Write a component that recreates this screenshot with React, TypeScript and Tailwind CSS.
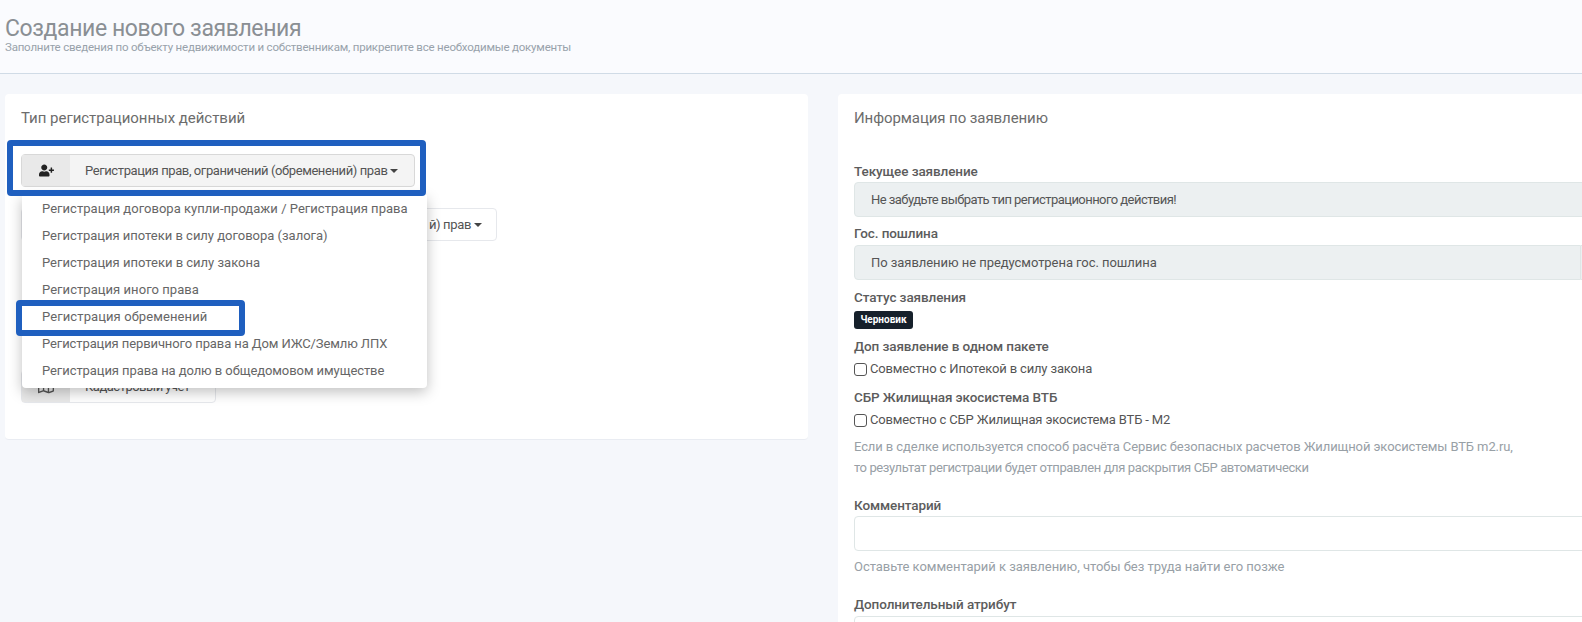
import { FaUserPlus, FaRegMap } from 'react-icons/fa';

const menuItems = [
  { text: 'Регистрация договора купли-продажи / Регистрация права', cls: 'tracking-[0.03px]' },
  { text: 'Регистрация ипотеки в силу договора (залога)', cls: 'tracking-[-0.01px]' },
  { text: 'Регистрация ипотеки в силу закона', cls: 'tracking-[0px]' },
  { text: 'Регистрация иного права', cls: 'tracking-[0.05px]' },
  { text: 'Регистрация обременений', cls: 'tracking-[0.1px]' },
  { text: 'Регистрация первичного права на Дом ИЖС/Землю ЛПХ', cls: 'tracking-[-0.1px]' },
  { text: 'Регистрация права на долю в общедомовом имуществе', cls: 'tracking-[-0.08px]' },
];

function Caret() {
  return <span className="ml-[3px] inline-block align-middle border-x-[4px] border-t-[4px] border-x-transparent border-t-[#444]" />;
}

function ActionButton({ width, active, icon, children }: { width: string; active?: boolean; icon?: React.ReactNode; children?: React.ReactNode }) {
  return (
    <div className={`flex h-[33px] ${width} items-stretch rounded border text-[13px] text-[#555] ${active ? 'border-[#d8d8d8] bg-[#f4f4f4]' : 'border-[#e6e8ec] bg-white'}`}>
      <div className="flex w-[48px] shrink-0 items-center justify-center bg-[#e9e9e9] text-[#222]">{icon}</div>
      <div className="flex flex-1 items-center whitespace-nowrap pl-[15px]">{children}</div>
    </div>
  );
}

function Label({ children }: { children: React.ReactNode }) {
  return <div className="h-[20px] text-[13.5px] font-medium leading-[18px] tracking-[-0.1px] text-[#5c5c5c]">{children}</div>;
}

function ReadOnly({ className, children }: { className?: string; children?: React.ReactNode }) {
  return (
    <div className={`flex h-[35px] items-center rounded-l border border-[#dfe6e6] bg-[#ecf0f1] px-4 text-[13px] text-[#555] ${className ?? ''}`}>
      {children}
    </div>
  );
}

function Check({ label }: { label: string }) {
  return (
    <div className="flex items-center gap-[3px] text-[13px] leading-[20px] tracking-[-0.15px] text-[#555]">
      <span className="h-[13px] w-[13px] rounded-[3px] border border-[#555] bg-white" />
      {label}
    </div>
  );
}

export default function App() {
  return (
    <div className="relative h-[622px] w-[1582px] overflow-hidden bg-[#f5f7fb] font-['Roboto',sans-serif] tracking-[-0.35px]">
      <header className="h-[74px] border-b border-[#d0dbe6] bg-[#fafbfe] px-[5px] pt-[15px]">
        <h1 className="text-[23px] leading-[27px] tracking-[-0.4px] text-[#8a8f94]">Создание нового заявления</h1>
        <p className="text-[11.5px] leading-[11px] tracking-[-0.2px] text-[#98a2ab]">Заполните сведения по объекту недвижимости и собственникам, прикрепите все необходимые документы</p>
      </header>

      <main className="flex items-start gap-[30px] pl-[5px] pt-[20px]">
        <section className="h-[346px] w-[803px] shrink-0 rounded border-b border-[#e9ecf2] bg-white px-4 pt-[15px]">
          <h2 className="text-[15px] leading-[18px] tracking-[-0.03px] text-[#6c6c6c]">Тип регистрационных действий</h2>
          <div className="mt-[27px] flex flex-col gap-[21px]">
            <ActionButton width="w-[394px]" active icon={<FaUserPlus size={15} />}>
              <span className="tracking-[-0.4px]">Регистрация прав, ограничений (обременений) прав</span>
              <Caret />
            </ActionButton>
            <ActionButton width="w-[476px]">
              <span className="w-full pr-[14px] text-right">й) прав<Caret /></span>
            </ActionButton>
            <div className="h-[33px]" />
            <div className="h-[33px]" />
            <ActionButton width="w-[195px]" icon={<FaRegMap size={16} className="text-[#555]" />}>
              <span className="tracking-[-0.5px]">Кадастровый учёт</span>
            </ActionButton>
          </div>
        </section>

        <section className="h-[600px] w-[800px] shrink-0 rounded bg-white pl-4 pt-[15px]">
          <h2 className="text-[15px] leading-[18px] tracking-[-0.08px] text-[#6c6c6c]">Информация по заявлению</h2>
          <div className="mt-[35px]"><Label>Текущее заявление</Label></div>
          <ReadOnly>
            <span className="tracking-[-0.55px]">Не забудьте выбрать тип регистрационного действия!</span>
          </ReadOnly>
          <div className="mt-[7px]"><Label>Гос. пошлина</Label></div>
          <div className="mt-[1px] flex">
            <ReadOnly className="w-[727px] shrink-0">
              <span className="tracking-[-0.05px]">По заявлению не предусмотрена гос. пошлина</span>
            </ReadOnly>
            <div className="h-[35px] flex-1 border-y border-[#dfe6e6] bg-[#ecf0f1]" />
          </div>
          <div className="mt-[8px]"><Label>Статус заявления</Label></div>
          <span className="mt-[3px] block h-[18px] w-[59px] rounded-[3px] bg-[#16202b] text-center text-[10px] font-bold leading-[18px] tracking-[0px] text-white">Черновик</span>
          <div className="mt-[8px]"><Label>Доп заявление в одном пакете</Label></div>
          <div className="mt-[2px]"><Check label="Совместно с Ипотекой в силу закона" /></div>
          <div className="mt-[9px]"><Label>СБР Жилищная экосистема ВТБ</Label></div>
          <div className="mt-[2px]"><Check label="Совместно с СБР Жилищная экосистема ВТБ - М2" /></div>
          <p className="mt-[6px] text-[13px] leading-[21px] text-[#98a0a6]">
            <span className="tracking-[-0.1px]">Если в сделке используется способ расчёта Сервис безопасных расчетов Жилищной экосистемы ВТБ m2.ru,</span>
            <br />
            <span className="tracking-[-0.39px]">то результат регистрации будет отправлен для раскрытия СБР автоматически</span>
          </p>
          <div className="mt-[18px]"><Label>Комментарий</Label></div>
          <input className="block h-[35px] w-full rounded border border-[#dfe6e6] bg-white" />
          <p className="mt-[6px] text-[13px] leading-[20px] tracking-[-0.03px] text-[#98a0a6]">Оставьте комментарий к заявлению, чтобы без труда найти его позже</p>
          <div className="mt-[18px]"><Label>Дополнительный атрибут</Label></div>
          <div className="mt-[1px] h-[35px] rounded border border-[#dfe6e6] bg-white" />
        </section>
      </main>

      <div className="absolute left-[22px] top-[195px] w-[405px] rounded-b bg-white pb-[4px] text-[13px] text-[#666] shadow-[0_4px_14px_rgba(0,0,0,0.25)]">
        {menuItems.map((item) => (
          <div key={item.text} className={`flex h-[27px] items-center whitespace-nowrap pl-5 ${item.cls}`}>{item.text}</div>
        ))}
      </div>

      <div className="pointer-events-none absolute left-[7px] top-[140px] h-[56px] w-[419px] rounded border-[6px] border-[#1f5fbf]" />
      <div className="pointer-events-none absolute left-[16px] top-[300px] h-[36px] w-[229px] rounded border-[6px] border-[#1f5fbf]" />
    </div>
  );
}
